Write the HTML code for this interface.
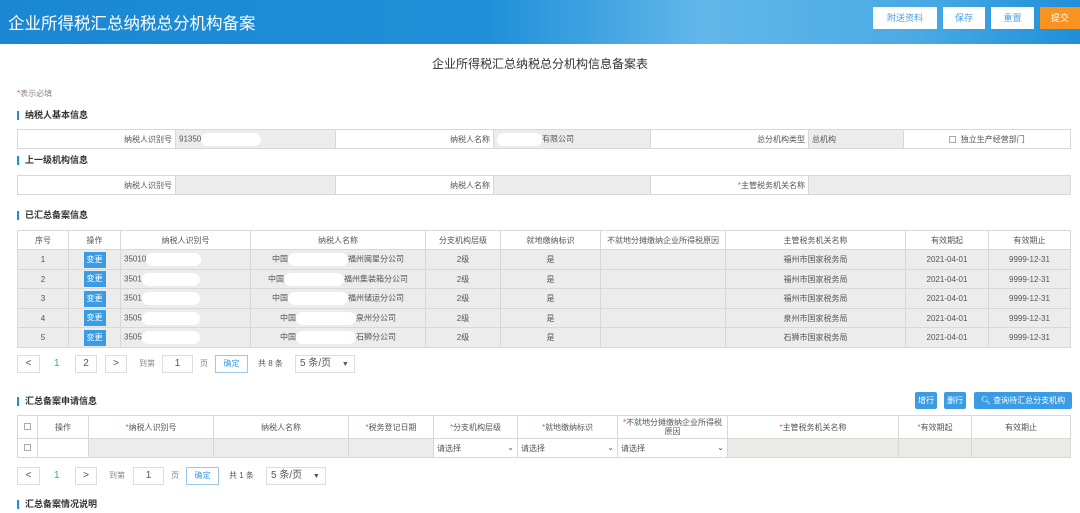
<!DOCTYPE html>
<html><head><meta charset="utf-8"><style>
*{margin:0;padding:0;box-sizing:border-box}
body{width:1080px;height:513px;overflow:hidden;background:#fff;position:relative;font-family:"Liberation Sans","Noto Sans CJK SC",sans-serif;color:#555;font-size:8px}
.a{position:absolute}
.hdr{left:0;top:0;width:1080px;height:44px;background:linear-gradient(90deg,#1b87d3 0%,#1e8fd8 45%,#62b7ea 65%,#4aaae4 85%,#1e8fd8 100%)}
.hdr h1{position:absolute;left:8px;top:10px;font-size:16.5px;font-weight:normal;color:#fff}
.btn{position:absolute;top:7px;height:22px;background:#fff;color:#4a9fe0;font-size:9px;text-align:center;line-height:22px}
.sec{position:absolute;left:17px;font-size:9px;font-weight:bold;color:#333;padding-left:6px;border-left:2px solid #1e8fd8;line-height:9px}
table{position:absolute;border-collapse:collapse;table-layout:fixed}
td{border:1px solid #d8d8d8;font-size:8px;color:#555;white-space:nowrap;overflow:hidden;padding:0 3px}
.g{background:#ececec}
.r{text-align:right}
.c{text-align:center}
.th td{background:#fff;text-align:center}
.dr td{background:#ececec;text-align:center}
.bb{display:inline-block;background:#3b9be3;color:#fff;width:22px;height:16px;line-height:16px;font-size:8px}
.pg{position:absolute;height:18px;border:1px solid #ddd;text-align:center;line-height:16px;font-size:10px;color:#555;background:#fff}
.pt{position:absolute;font-size:8px;color:#888;line-height:18px}
.rq{color:#e55}
.wm{display:inline-block;background:#fff;height:13px;border-radius:7px;vertical-align:middle}
.sb{position:absolute;top:392px;height:17px;background:#3b9be3;color:#fff;font-size:8px;text-align:center;line-height:17px;border-radius:2px}
</style></head><body>
<div class="a hdr"><h1>企业所得税汇总纳税总分机构备案</h1>
<div class="btn" style="left:873px;width:64px">附送资料</div>
<div class="btn" style="left:943px;width:42px">保存</div>
<div class="btn" style="left:991px;width:43px">重置</div>
<div class="btn" style="left:1040px;width:40px;background:#f7931e;color:#fff">提交</div>
</div>
<div class="a" style="left:0;width:1080px;top:55px;text-align:center;font-size:12px;color:#333">企业所得税汇总纳税总分机构信息备案表</div>
<div class="a" style="left:17px;top:88px;font-size:8px;color:#888"><span class="rq">*</span>表示必填</div>
<div class="sec" style="top:111px">纳税人基本信息</div>
<table style="left:17px;top:129px;width:1053px"><colgroup><col width="158"><col width="160"><col width="158"><col width="157"><col width="158"><col width="95"><col width="167"></colgroup>
<tr style="height:19px"><td class="r">纳税人识别号</td><td class="g">91350<span class="wm" style="width:60px"></span></td><td class="r">纳税人名称</td><td class="g"><span class="wm" style="width:45px"></span>有限公司</td><td class="r">总分机构类型</td><td class="g">总机构</td><td class="c"><span style="display:inline-block;width:7px;height:7px;border:1px solid #aaa;vertical-align:middle"></span>&nbsp; 独立生产经营部门</td></tr></table>
<div class="sec" style="top:156px">上一级机构信息</div>
<table style="left:17px;top:175px;width:1053px"><colgroup><col width="158"><col width="160"><col width="158"><col width="157"><col width="158"><col width="262"></colgroup>
<tr style="height:19px"><td class="r">纳税人识别号</td><td class="g"></td><td class="r">纳税人名称</td><td class="g"></td><td class="r"><span class="rq">*</span>主管税务机关名称</td><td class="g"></td></tr></table>
<div class="sec" style="top:211px">已汇总备案信息</div>
<table style="left:17px;top:230px;width:1053px"><colgroup><col width="51"><col width="52"><col width="130"><col width="175"><col width="75"><col width="100"><col width="125"><col width="180"><col width="83"><col width="82"></colgroup>
<tr class="th" style="height:19px"><td>序号</td><td>操作</td><td>纳税人识别号</td><td>纳税人名称</td><td>分支机构层级</td><td>就地缴纳标识</td><td>不就地分摊缴纳企业所得税原因</td><td>主管税务机关名称</td><td>有效期起</td><td>有效期止</td></tr>
<tr class="dr" style="height:20px"><td>1</td><td><span class="bb">变更</span></td><td style="text-align:left">35010<span class="wm" style="width:55px"></span></td><td>中国<span class="wm" style="width:60px"></span>福州闽星分公司</td><td>2级</td><td>是</td><td></td><td>福州市国家税务局</td><td>2021-04-01</td><td>9999-12-31</td></tr>
<tr class="dr" style="height:19px"><td>2</td><td><span class="bb">变更</span></td><td style="text-align:left">3501<span class="wm" style="width:58px"></span></td><td>中国<span class="wm" style="width:60px"></span>福州集装箱分公司</td><td>2级</td><td>是</td><td></td><td>福州市国家税务局</td><td>2021-04-01</td><td>9999-12-31</td></tr>
<tr class="dr" style="height:20px"><td>3</td><td><span class="bb">变更</span></td><td style="text-align:left">3501<span class="wm" style="width:58px"></span></td><td>中国<span class="wm" style="width:60px"></span>福州储运分公司</td><td>2级</td><td>是</td><td></td><td>福州市国家税务局</td><td>2021-04-01</td><td>9999-12-31</td></tr>
<tr class="dr" style="height:19px"><td>4</td><td><span class="bb">变更</span></td><td style="text-align:left">3505<span class="wm" style="width:58px"></span></td><td>中国<span class="wm" style="width:60px"></span>泉州分公司</td><td>2级</td><td>是</td><td></td><td>泉州市国家税务局</td><td>2021-04-01</td><td>9999-12-31</td></tr>
<tr class="dr" style="height:20px"><td>5</td><td><span class="bb">变更</span></td><td style="text-align:left">3505<span class="wm" style="width:58px"></span></td><td>中国<span class="wm" style="width:60px"></span>石狮分公司</td><td>2级</td><td>是</td><td></td><td>石狮市国家税务局</td><td>2021-04-01</td><td>9999-12-31</td></tr>
</table>
<div class="pg" style="left:17px;top:355px;width:23px">&lt;</div>
<div class="pt" style="left:54px;top:355px;color:#3b9be3;font-size:10px">1</div>
<div class="pg" style="left:75px;top:355px;width:22px">2</div>
<div class="pg" style="left:105px;top:355px;width:22px">&gt;</div>
<div class="pt" style="left:139px;top:355px">到第</div>
<div class="pg" style="left:162px;top:355px;width:31px">1</div>
<div class="pt" style="left:200px;top:355px">页</div>
<div class="pg" style="left:215px;top:355px;width:33px;font-size:8px;color:#3b9be3;border-color:#9cc7ea">确定</div>
<div class="pt" style="left:258px;top:355px;color:#555">共 8 条</div>
<div class="pg" style="left:295px;top:355px;width:60px;text-align:left;padding-left:4px">5 条/页 <span style="font-size:7px;margin-left:8px">▼</span></div>
<div class="sec" style="top:397px">汇总备案申请信息</div>
<div class="sb" style="left:915px;width:22px">增行</div>
<div class="sb" style="left:944px;width:22px">删行</div>
<div class="sb" style="left:974px;width:98px">🔍︎ 查询待汇总分支机构</div>
<table style="left:17px;top:415px;width:1053px"><colgroup><col width="20"><col width="51"><col width="125"><col width="135"><col width="85"><col width="84"><col width="100"><col width="110"><col width="171"><col width="73"><col width="99"></colgroup>
<tr class="th" style="height:23px"><td><span style="display:inline-block;width:7px;height:7px;border:1px solid #aaa"></span></td><td>操作</td><td><span class="rq">*</span>纳税人识别号</td><td>纳税人名称</td><td><span class="rq">*</span>税务登记日期</td><td><span class="rq">*</span>分支机构层级</td><td><span class="rq">*</span>就地缴纳标识</td><td style="white-space:normal;line-height:9px"><span class="rq">*</span>不就地分摊缴纳企业所得税原因</td><td><span class="rq">*</span>主管税务机关名称</td><td><span class="rq">*</span>有效期起</td><td>有效期止</td></tr>
<tr style="height:19px"><td class="c"><span style="display:inline-block;width:7px;height:7px;border:1px solid #aaa"></span></td><td></td><td class="g"></td><td class="g"></td><td class="g"></td><td>请选择<span style="float:right">⌄</span></td><td>请选择<span style="float:right">⌄</span></td><td>请选择<span style="float:right">⌄</span></td><td style="background:#e8ebe6"></td><td style="background:#e8ebe6"></td><td style="background:#e8ebe6"></td></tr>
</table>
<div class="pg" style="left:17px;top:467px;width:23px">&lt;</div>
<div class="pt" style="left:54px;top:467px;color:#3b9be3;font-size:10px">1</div>
<div class="pg" style="left:75px;top:467px;width:22px">&gt;</div>
<div class="pt" style="left:109px;top:467px">到第</div>
<div class="pg" style="left:133px;top:467px;width:31px">1</div>
<div class="pt" style="left:171px;top:467px">页</div>
<div class="pg" style="left:186px;top:467px;width:33px;font-size:8px;color:#3b9be3;border-color:#9cc7ea">确定</div>
<div class="pt" style="left:229px;top:467px;color:#555">共 1 条</div>
<div class="pg" style="left:266px;top:467px;width:60px;text-align:left;padding-left:4px">5 条/页 <span style="font-size:7px;margin-left:8px">▼</span></div>
<div class="sec" style="top:500px">汇总备案情况说明</div>
</body></html>
